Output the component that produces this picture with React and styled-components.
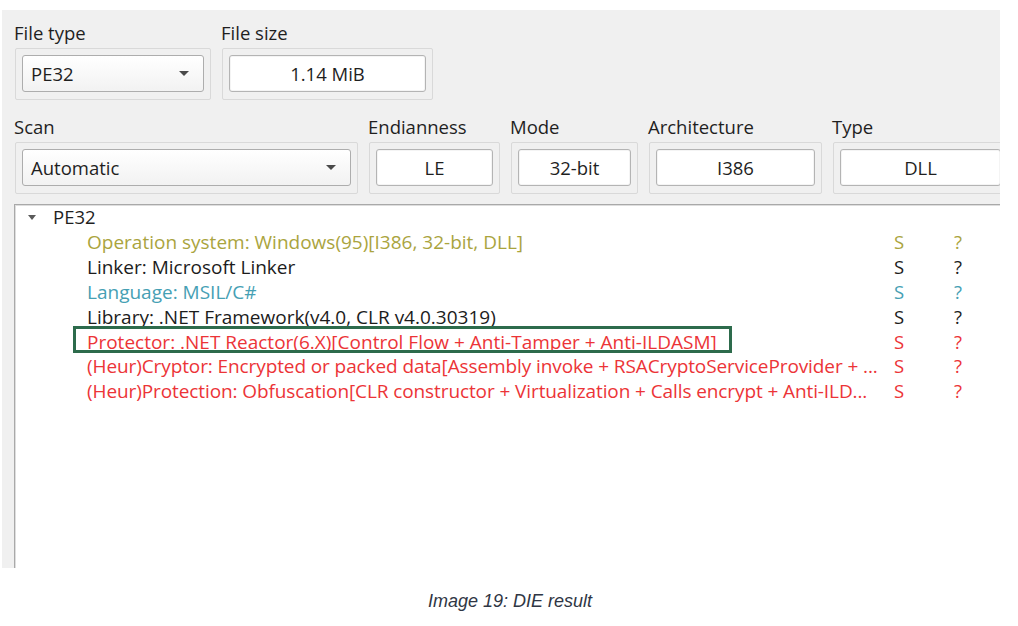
import styled, { createGlobalStyle } from "styled-components";

const GlobalStyle = createGlobalStyle`
  html, body {
    margin: 0;
    padding: 0;
    background: #ffffff;
  }
  body {
    font-family: "Open Sans", "Noto Sans", sans-serif;
  }
`;

const Page = styled.div`
  width: 1018px;
  height: 626px;
  box-sizing: border-box;
  padding: 10px 0 0 2px;
  display: flex;
  flex-direction: column;
  background: #fff;
`;

const Window = styled.div`
  width: 998px;
  height: 558px;
  box-sizing: border-box;
  padding: 11px 0 0 12px;
  background: #f0f0f0;
  overflow: hidden;
  display: flex;
  flex-direction: column;
`;

const Row = styled.div`
  display: flex;
  gap: 10px;
  margin-bottom: ${({ $mb }) => $mb || 0}px;
  flex-shrink: 0;
`;

const Field = styled.div`
  display: flex;
  flex-direction: column;
  width: ${({ $w }) => $w}px;
  flex-shrink: 0;
`;

const Label = styled.div`
  font-size: 18.5px;
  line-height: 24px;
  height: 24px;
  margin-bottom: 3px;
  color: #1f1f1f;
  white-space: nowrap;
`;

const Frame = styled.div`
  margin-left: 1px;
  box-sizing: border-box;
  border: 1px solid #d9d9d9;
  border-radius: 2px;
  padding: 6px 6px 7px 6px;
`;

const Combo = styled.div`
  height: 37px;
  box-sizing: border-box;
  border: 1px solid #adadad;
  border-radius: 3px;
  background: linear-gradient(#ffffff, #f2f2f2);
  display: flex;
  align-items: center;
  justify-content: space-between;
  padding: 0 14px 0 8px;
  font-size: 18.5px;
  color: #1f1f1f;
`;

const Arrow = styled.span`
  width: 0;
  height: 0;
  border-left: 5px solid transparent;
  border-right: 5px solid transparent;
  border-top: 5px solid #4a4a4a;
`;

const Edit = styled.div`
  height: 37px;
  box-sizing: border-box;
  border: 1px solid #b4b4b4;
  border-radius: 3px;
  background: #ffffff;
  box-shadow: inset 0 0 0 1px #f4f4f4;
  display: flex;
  align-items: center;
  justify-content: center;
  font-size: 18.5px;
  color: #1f1f1f;
  white-space: nowrap;
`;

const List = styled.div`
  flex: 1;
  width: 1000px;
  background: #ffffff;
  border-left: 1px solid #a9a9a9;
  border-top: 1px solid #a9a9a9;
  box-shadow: inset 1px 1px 0 #dedede;
  box-sizing: border-box;
`;

const TreeHead = styled.div`
  height: 24.85px;
  line-height: 24px;
  display: flex;
  align-items: center;
  padding-left: 13px;
  font-size: 18.5px;
  color: #1f1f1f;
`;

const Toggle = styled.span`
  width: 0;
  height: 0;
  border-left: 4.5px solid transparent;
  border-right: 4.5px solid transparent;
  border-top: 5px solid #5a5a5a;
  margin-right: 17px;
`;

const Item = styled.div`
  height: 24.85px;
  line-height: 24px;
  display: grid;
  grid-template-columns: 807px 60px auto;
  align-items: center;
  padding-left: 72px;
  font-size: 18.5px;
  color: ${({ $color }) => $color};
`;

const ItemText = styled.span`
  position: relative;
  white-space: nowrap;
  font-size: 19px;
  letter-spacing: ${({ $tight }) => ($tight ? "-0.1px" : "0")};
`;

const Highlight = styled.span`
  position: absolute;
  left: -14px;
  top: -4px;
  width: 659px;
  height: 27px;
  box-sizing: border-box;
  border: 3px solid #2d6b4c;
  pointer-events: none;
`;

const Caption = styled.div`
  margin-top: 22px;
  text-align: center;
  font-family: "Liberation Sans", Arial, sans-serif;
  font-style: italic;
  font-size: 18px;
  line-height: 22px;
  color: #2f3644;
`;

const colors = {
  olive: "#aaa43e",
  black: "#1c1c1c",
  teal: "#46a0b4",
  red: "#ec3437",
};

const items = [
  { text: "Operation system: Windows(95)[I386, 32-bit, DLL]", color: colors.olive },
  { text: "Linker: Microsoft Linker", color: colors.black },
  { text: "Language: MSIL/C#", color: colors.teal },
  { text: "Library: .NET Framework(v4.0, CLR v4.0.30319)", color: colors.black },
  {
    text: "Protector: .NET Reactor(6.X)[Control Flow + Anti-Tamper + Anti-ILDASM]",
    color: colors.red,
    marked: true,
  },
  {
    text: "(Heur)Cryptor: Encrypted or packed data[Assembly invoke + RSACryptoServiceProvider + ...",
    color: colors.red,
    tight: true,
  },
  {
    text: "(Heur)Protection: Obfuscation[CLR constructor + Virtualization + Calls encrypt + Anti-ILD...",
    color: colors.red,
    tight: true,
  },
];

const App = () => {
  return (
    <Page>
      <GlobalStyle />
      <Window>
        <Row $mb={15}>
          <Field $w={197}>
            <Label>File type</Label>
            <Frame>
              <Combo>
                PE32
                <Arrow />
              </Combo>
            </Frame>
          </Field>
          <Field $w={212}>
            <Label>File size</Label>
            <Frame>
              <Edit>1.14 MiB</Edit>
            </Frame>
          </Field>
        </Row>
        <Row $mb={10}>
          <Field $w={344}>
            <Label>Scan</Label>
            <Frame>
              <Combo>
                Automatic
                <Arrow />
              </Combo>
            </Frame>
          </Field>
          <Field $w={132}>
            <Label>Endianness</Label>
            <Frame>
              <Edit>LE</Edit>
            </Frame>
          </Field>
          <Field $w={128}>
            <Label>Mode</Label>
            <Frame>
              <Edit>32-bit</Edit>
            </Frame>
          </Field>
          <Field $w={174}>
            <Label>Architecture</Label>
            <Frame>
              <Edit>I386</Edit>
            </Frame>
          </Field>
          <Field $w={176}>
            <Label>Type</Label>
            <Frame>
              <Edit>DLL</Edit>
            </Frame>
          </Field>
        </Row>
        <List>
          <TreeHead>
            <Toggle />
            PE32
          </TreeHead>
          {items.map((it) => (
            <Item key={it.text} $color={it.color}>
              <ItemText $tight={it.tight}>
                {it.text}
                {it.marked && <Highlight />}
              </ItemText>
              <span>S</span>
              <span>?</span>
            </Item>
          ))}
        </List>
      </Window>
      <Caption>Image 19: DIE result</Caption>
    </Page>
  );
};

export default App;
